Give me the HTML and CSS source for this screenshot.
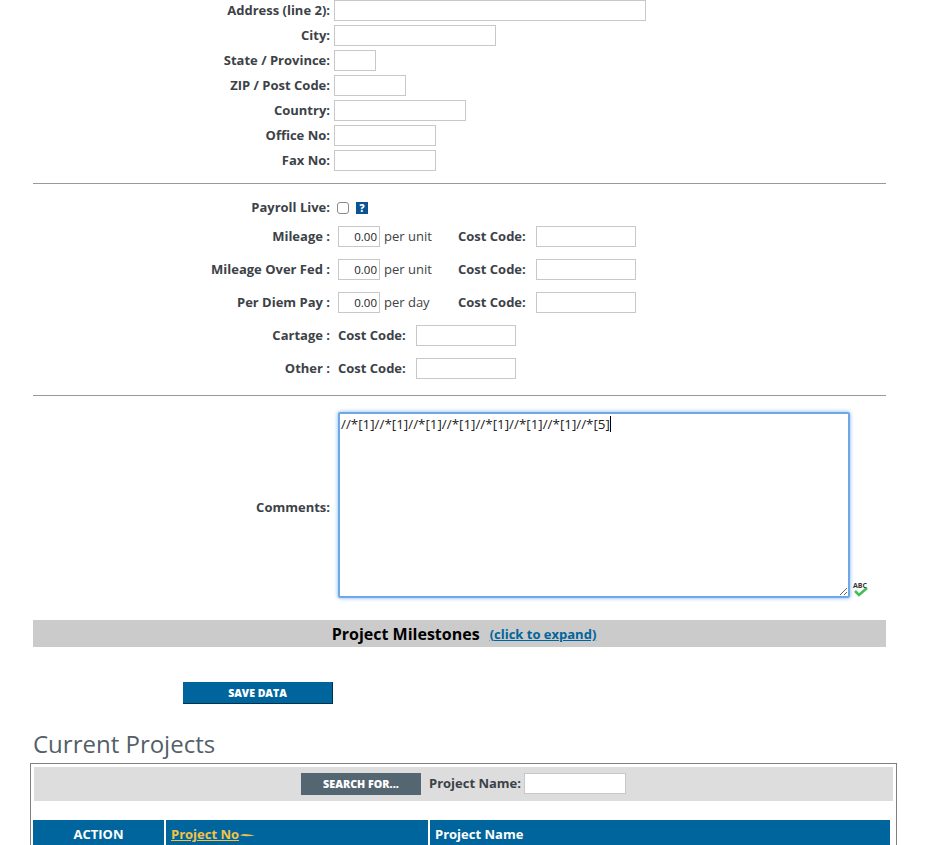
FILE: index.html
```html
<!DOCTYPE html>
<html>
<head>
<title>Project Detail</title>
<meta charset="utf-8">
<link rel="stylesheet" href="styles.css">
</head>
<body>
<div class="page">
	<div class="address">
		<div class="row"><label class="lbl">Address (line 2):</label><input class="box w312" type="text"></div>
		<div class="row"><label class="lbl">City:</label><input class="box w162" type="text"></div>
		<div class="row"><label class="lbl">State / Province:</label><input class="box w42" type="text"></div>
		<div class="row"><label class="lbl">ZIP / Post Code:</label><input class="box w72" type="text"></div>
		<div class="row"><label class="lbl">Country:</label><input class="box w132" type="text"></div>
		<div class="row"><label class="lbl">Office No:</label><input class="box w102" type="text"></div>
		<div class="row"><label class="lbl">Fax No:</label><input class="box w102" type="text"></div>
	</div>
	<hr class="rule rule1">
	<div class="row payroll">
		<label class="lbl">Payroll Live:</label>
		<span class="check"></span>
		<span class="help">?</span>
	</div>
	<div class="pay">
		<div class="row wide">
			<label class="lbl">Mileage :</label>
			<input class="box w42 num" type="text" value="0.00">
			<span class="unit">per unit</span>
			<label class="code code-wide">Cost Code:</label>
			<input class="box w100" type="text">
		</div>
		<div class="row wide">
			<label class="lbl">Mileage Over Fed :</label>
			<input class="box w42 num" type="text" value="0.00">
			<span class="unit">per unit</span>
			<label class="code code-wide">Cost Code:</label>
			<input class="box w100" type="text">
		</div>
		<div class="row wide">
			<label class="lbl">Per Diem Pay :</label>
			<input class="box w42 num" type="text" value="0.00">
			<span class="unit">per day</span>
			<label class="code code-wide">Cost Code:</label>
			<input class="box w100" type="text">
		</div>
		<div class="row wide">
			<label class="lbl">Cartage :</label>
			<label class="code code-wide">Cost Code:</label>
			<input class="box w100" type="text">
		</div>
		<div class="row wide">
			<label class="lbl">Other :</label>
			<label class="code code-wide">Cost Code:</label>
			<input class="box w100" type="text">
		</div>
	</div>
	<hr class="rule rule2">
	<div class="row comments">
		<label class="lbl">Comments:</label>
		<div class="notewrap">
			<textarea class="note">//*[1]//*[1]//*[1]//*[1]//*[1]//*[1]//*[1]//*[5]</textarea>
			<span class="caret"></span>
		</div>
		<div class="spell">
			<span class="spell-abc">ABC</span>
			<svg class="spell-tick" width="14" height="10" viewBox="0 0 14 10"><path d="M1 4 L5 8 L13 1" fill="none" stroke="#45bd55" stroke-width="2.6"/></svg>
		</div>
	</div>
	<div class="milestones">
		<span class="ms-title">Project Milestones</span>
		<a class="ms-link" href="#">(click to expand)</a>
	</div>
	<button class="save" type="button">SAVE DATA</button>
	<h2 class="heading">Current Projects</h2>
	<div class="projects">
		<div class="search">
			<button class="searchbtn" type="button">SEARCH FOR...</button>
			<label class="code">Project Name:</label>
			<input class="box w102" type="text">
		</div>
		<table class="grid" cellpadding="0" cellspacing="0">
		<tr>
			<th class="col-action">ACTION</th>
			<th class="col-no"><a href="#">Project No</a><svg class="sort" width="15" height="5" viewBox="0 0 15 5"><path d="M0 2.5 Q3 0.6 7 1.2 Q11 1.8 15 2.5 Q7 4 0 2.5 Z" fill="#e8c050"/></svg></th>
			<th class="col-name">Project Name</th>
		</tr>
		</table>
	</div>
</div>
</body>
</html>
```

FILE: styles.css
```css
html, body {
	margin: 0;
	padding: 0;
	height: 845px;
	overflow: hidden;
	background: #fff;
}
body {
	font-family: "Open Sans", sans-serif;
	font-size: 13px;
	color: #3c4248;
}
.page {
	width: 853px;
	margin-left: 33px;
}
.row {
	display: flex;
	align-items: center;
}
.address .row {
	height: 21px;
	margin-bottom: 4px;
}
.lbl {
	width: 297px;
	flex: none;
	padding-bottom: 2px;
	text-align: right;
	font-weight: 700;
}
.address .lbl {
	margin-right: 4px;
}
.box {
	box-sizing: border-box;
	height: 21px;
	margin: 0;
	padding: 0 2px;
	border: 1px solid #c8c8c8;
	background: #fff;
	font-family: "Open Sans", sans-serif;
	font-size: 12px;
	color: #222;
	flex: none;
}
.w312 { width: 312px; }
.w162 { width: 162px; }
.w132 { width: 132px; }
.w102 { width: 102px; }
.w100 { width: 100px; }
.w72 { width: 72px; }
.w42 { width: 42px; }
.num {
	font-size: 11.5px;
	text-align: right;
}
.rule {
	height: 1px;
	margin: 0;
	border: 0;
	background: #999;
}
.rule1 {
	margin-top: 12px;
}
.payroll {
	height: 16px;
	margin-top: 15px;
}
.payroll .lbl {
	padding-bottom: 0;
}
.check {
	box-sizing: border-box;
	width: 12px;
	height: 12px;
	margin: 2px 0 0 7px;
	border: 1px solid #8a8a8a;
	border-radius: 3px;
	background: #fff;
}
.help {
	width: 12px;
	height: 12px;
	margin: 2px 0 0 7px;
	background: #0b5394;
	color: #fff;
	font-size: 10px;
	font-weight: 800;
	line-height: 12px;
	text-align: center;
}
.pay {
	margin-top: 11px;
}
.wide {
	height: 21px;
	margin-bottom: 12px;
}
.wide .lbl {
	margin-right: 8px;
}
.unit {
	width: 74px;
	margin-left: 4px;
	padding-bottom: 2px;
	flex: none;
}
.code {
	padding-bottom: 2px;
	font-weight: 700;
	flex: none;
}
.code-wide {
	width: 78px;
}
.rule2 {
	margin-top: 16px;
}
.comments {
	margin-top: 16px;
	height: 186px;
}
.comments .lbl {
	margin-right: 8px;
	padding-top: 4px;
	padding-bottom: 0;
}
.notewrap {
	position: relative;
	width: 512px;
	height: 186px;
	flex: none;
}
.note {
	display: block;
	box-sizing: border-box;
	width: 512px;
	height: 186px;
	margin: 0;
	padding: 2px 1px;
	border: 2px solid #6fa8e6;
	border-radius: 2px;
	box-shadow: 0 0 4px #7fb3ee;
	outline: 0;
	font-family: "Open Sans", sans-serif;
	font-size: 13.4px;
	line-height: 16px;
	color: #222;
}
.caret {
	position: absolute;
	left: 272px;
	top: 4px;
	width: 1px;
	height: 16px;
	background: #000;
}
.spell {
	position: relative;
	width: 18px;
	height: 16px;
	margin-left: 2px;
	align-self: flex-end;
}
.spell-abc {
	position: absolute;
	left: 1px;
	top: 0;
	font-size: 7px;
	line-height: 8px;
	font-weight: 700;
	color: #333;
}
.spell-tick {
	position: absolute;
	left: 2px;
	top: 5px;
}
.milestones {
	display: flex;
	justify-content: center;
	align-items: center;
	gap: 10px;
	height: 27px;
	margin-top: 22px;
	padding-left: 9px;
	background: #cbcbcb;
}
.ms-title {
	font-size: 16px;
	font-weight: 700;
	color: #000;
}
.ms-link {
	font-size: 13px;
	font-weight: 700;
	color: #00659c;
}
.save {
	display: block;
	box-sizing: border-box;
	width: 150px;
	height: 22px;
	margin: 35px 0 0 150px;
	padding: 0;
	border: 0;
	border-right: 1px solid #01324e;
	border-bottom: 1px solid #01324e;
	background: #00659c;
	color: #fff;
	font-family: "Open Sans", sans-serif;
	font-size: 10.5px;
	font-weight: 800;
}
.heading {
	margin: 24px 0 0;
	font-size: 24px;
	font-weight: 400;
	line-height: 32px;
	color: #545f69;
}
.projects {
	box-sizing: border-box;
	width: 867px;
	height: 200px;
	margin: 3px 0 0 -3px;
	padding: 3px;
	border: 1px solid #808080;
}
.search {
	display: flex;
	align-items: center;
	justify-content: center;
	gap: 8px;
	height: 34px;
	background: #ddd;
}
.search .box {
	margin: 0 0 1px -5px;
}
.searchbtn {
	box-sizing: border-box;
	width: 120px;
	height: 22px;
	padding: 0;
	border: 0;
	background: #546672;
	color: #fff;
	font-family: "Open Sans", sans-serif;
	font-size: 10.7px;
	font-weight: 800;
}
.grid {
	width: 857px;
	margin: 19px 0 0 -1px;
	border-collapse: separate;
	border-spacing: 0;
	table-layout: fixed;
}
.grid th {
	box-sizing: border-box;
	height: 28px;
	padding: 0 5px;
	background: #00659c;
	background-clip: padding-box;
	border-left: 2px solid #fff;
	color: #fff;
	font-size: 13px;
	font-weight: 700;
	text-align: left;
	vertical-align: middle;
}
.grid .col-action {
	width: 131px;
	border-left: 0;
	text-align: center;
}
.grid .col-no {
	width: 264px;
}
.col-no a {
	color: #f5c242;
}
.sort {
	margin-left: 1px;
	vertical-align: middle;
}
```
